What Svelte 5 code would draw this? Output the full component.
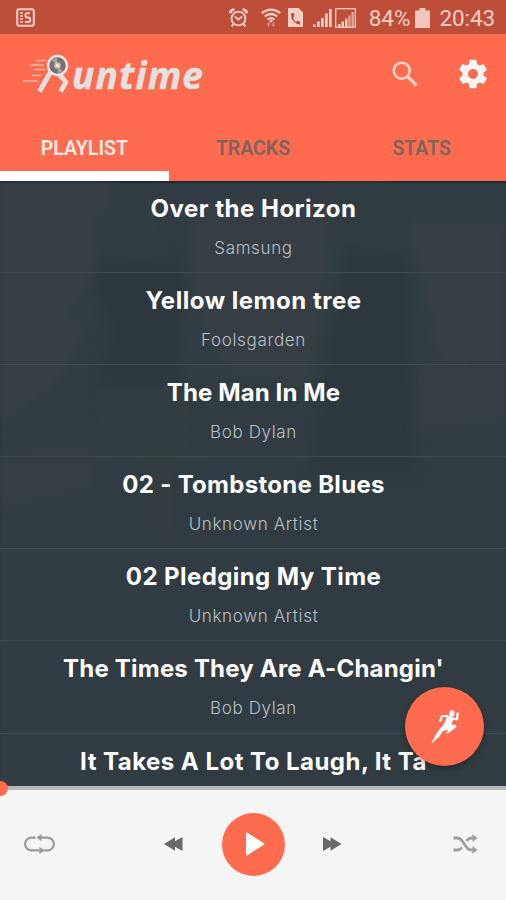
<script lang="ts">
  type Track = { title: string; artist?: string; tracking: number };

  const tabs = ['PLAYLIST', 'TRACKS', 'STATS'];
  let active = $state('PLAYLIST');
  let progress = $state(0);

  const tracks: Track[] = [
    { title: 'Over the Horizon', artist: 'Samsung', tracking: 0.5 },
    { title: 'Yellow lemon tree', artist: 'Foolsgarden', tracking: 0.52 },
    { title: 'The Man In Me', artist: 'Bob Dylan', tracking: 0.12 },
    { title: '02 - Tombstone Blues', artist: 'Unknown Artist', tracking: 0.3 },
    { title: '02 Pledging My Time', artist: 'Unknown Artist', tracking: 0.42 },
    { title: "The Times They Are A-Changin'", artist: 'Bob Dylan', tracking: 0.2 },
    { title: 'It Takes A Lot To Laugh, It Ta', tracking: 0.47 },
  ];
</script>

<div class="app">
  <div class="status">
    <svg class="note" width="19" height="19" viewBox="0 0 19 19">
      <rect x="1.2" y="1.2" width="16.6" height="16.6" rx="2" fill="none" stroke="currentColor" stroke-width="2" />
      <path d="M4 5h3M4 8h3M4 11h3M4 14h3" stroke="currentColor" stroke-width="1.6" />
      <path d="M14 5.2h-2.6q-2 0-2 2t2 2.3h1q1.8 0 1.8 2.2t-2 2.3H9" fill="none" stroke="currentColor" stroke-width="2" />
    </svg>
    <div class="indicators">
      <svg class="alarm" width="19" height="20" viewBox="0 0 19 20">
        <g fill="none" stroke="currentColor" stroke-width="1.9">
          <circle cx="9.5" cy="10.5" r="6.9" />
          <path d="M5.8 8.4l3.5 3.4 3.8-3.4M4.6 15.8l-2 2.5M14.4 15.8l2 2.5" />
          <path d="M1 5.3Q1.6 1.8 5.5 1.5M13.5 1.5q3.9.3 4.5 3.8" stroke-width="2.6" />
        </g>
      </svg>
      <svg class="wifi" width="20" height="20" viewBox="0 0 20 20">
        <g fill="none" stroke="currentColor" stroke-width="2.2">
          <path d="M.8 5.2q9.2-7 18.4 0M3.7 8.5q6.3-5 12.6 0M6.5 11.6q3.5-2.8 7 0" />
        </g>
        <circle cx="10" cy="13" r="1.5" fill="currentColor" />
        <path d="M7.6 14l2 2.5H8.3V19H6.9v-2.5H5.6zM12.4 19l-2-2.5h1.3V14h1.4v2.5h1.3z" fill="currentColor" opacity=".5" />
      </svg>
      <svg class="sim" width="15" height="19" viewBox="0 0 15 19">
        <path d="M1 0h9.5L15 4.5V18q0 1-1 1H1q-1 0-1-1V1q0-1 1-1z" fill="currentColor" />
        <path d="M3.4 5q-1 5 2 8.2t6.6 3.3l.2-2.8-2.9-1-1.3 1.2Q5.4 12 5.3 9.4l1.2-1.1L5.8 5z" fill="#bf4e39" />
      </svg>
      <svg class="bars" width="19" height="19" viewBox="0 0 19 19">
        <path d="M0 16.5h2.5V19H0zM4 13.5h2.7V19H4zM8 10h2.7v9H8zM12 5.5h2.7V19H12zM16 1h2.7v18H16z" fill="currentColor" />
      </svg>
      <svg class="boxed" width="21" height="20" viewBox="0 0 21 20">
        <rect x=".7" y=".7" width="19.6" height="18.6" fill="none" stroke="currentColor" stroke-width="1.3" />
        <path d="M3 16h2.500v3H3zM6.500 13.500H9V19H6.500zM10 10.500h2.500V19H10z" fill="currentColor" />
        <path d="M13.300 7.500h2.500V19h-2.500zM16.500 4H19v15h-2.500z" fill="currentColor" opacity=".65" />
      </svg>
      <span class="percent">84%</span>
      <svg class="battery" width="15" height="20" viewBox="0 0 15 20">
        <path d="M4.500 0h6v2.500H15V20H0V2.500h4.500z" fill="currentColor" />
      </svg>
      <span class="clock">20:43</span>
    </div>
  </div>

  <header>
    <div class="logo">
      <svg width="48" height="42" viewBox="0 0 48 42">
        <path d="M15 7.500h10M9 12h14M13 16.500h11M11 22.500h9M2 28h15" stroke="#f6b5a7" stroke-width="1.500" />
        <path d="M30 18L18.500 38.500" stroke="#dfdcdc" stroke-width="5" fill="none" />
        <path d="M39 19q-.5 4 2.500 6l3.500 4-5.500 9.500" stroke="#e4e1e1" stroke-width="4.800" fill="none" stroke-linejoin="round" />
        <circle cx="36.500" cy="12.500" r="9.500" fill="#77706f" stroke="#e9e6e5" stroke-width="2.500" />
        <path d="M36.500 12.500L31 7.300a7.500 7.500 0 0 1 5-2.400zM36.500 12.500l5.200 5.400a7.500 7.500 0 0 1-5 2.200z" fill="#aaa5a2" />
        <circle cx="36.500" cy="12.500" r="3.200" fill="#c9c5bd" />
        <circle cx="36.500" cy="12.500" r="1.500" fill="#fff6cc" />
      </svg>
      <span>untime</span>
    </div>
    <div class="actions">
      <button aria-label="Search">
        <svg width="26" height="26" viewBox="0 0 26 26">
          <circle cx="9.700" cy="9.700" r="8" fill="none" stroke="#ffd3ca" stroke-width="2.600" />
          <path d="M15.500 15.500l9 9" stroke="#ffd3ca" stroke-width="3.200" />
        </svg>
      </button>
      <button aria-label="Settings">
        <svg width="34" height="34" viewBox="0 0 24 24">
          <path
            fill="#f7f5f5"
            d="M19.430 12.980c.04-.32.07-.64.07-.98s-.03-.66-.07-.98l2.110-1.650c.19-.15.24-.42.12-.64l-2-3.460c-.12-.22-.39-.3-.61-.22l-2.490 1c-.52-.4-1.080-.73-1.690-.98l-.38-2.650C14.460 2.180 14.250 2 14 2h-4c-.25 0-.46.18-.49.42l-.38 2.650c-.61.25-1.170.59-1.690.98l-2.490-1c-.23-.09-.49 0-.61.22l-2 3.460c-.13.22-.07.49.12.64l2.110 1.650c-.04.32-.07.65-.07.98s.03.66.07.98l-2.110 1.650c-.19.15-.24.42-.12.64l2 3.460c.12.22.39.3.61.22l2.490-1c.52.4 1.080.73 1.690.98l.38 2.650c.03.24.24.42.49.42h4c.25 0 .46-.18.49-.42l.38-2.650c.61-.25 1.170-.59 1.690-.98l2.490 1c.23.09.49 0 .61-.22l2-3.460c.12-.22.07-.49-.12-.64l-2.110-1.650zM12 15.500c-1.930 0-3.500-1.570-3.500-3.500s1.570-3.500 3.500-3.500 3.500 1.570 3.500 3.500-1.570 3.500-3.500 3.500z"
          />
        </svg>
      </button>
    </div>
  </header>

  <nav>
    {#each tabs as tab}
      <button class:active={active === tab} onclick={() => (active = tab)}>{tab}</button>
    {/each}
  </nav>

  <main>
    <!-- faint runners behind the list -->
    <svg class="backdrop" viewBox="0 0 506 605" preserveAspectRatio="none">
      <g class="soft">
        <path d="M0 0h110v90L60 200l-60 40zM190 20h140v190L190 180zM410 40h96v140h-96z" fill="#383f45" />
        <path d="M118 20q20-14 38 0l2 50 35 10 8 65 35 50-5 20-36-25-6 90H95l10-110-5-30-40 5 38-60-5-50 25-18z" fill="#323e40" />
        <path d="M97 72l40 8 50-4-5 82 2 48H98l10-55-15-40z" fill="#2c383e" />
        <path d="M325 0h62v50l30 20 25 115h-40l-88 50H308l10-110 10-60z" fill="#313e40" />
        <path d="M345 65l65 10 5 220H310l15-130z" fill="#2c383e" />
        <path d="M0 275l90-15v45L0 330zM420 185l86-10v65l-86 10z" fill="#373e43" />
        <path d="M150 270h25v90h-25z" fill="#353d41" />
      </g>
    </svg>
    <ul>
      {#each tracks as track}
        <li>
          <strong style="letter-spacing: {track.tracking}px">{track.title}</strong>
          {#if track.artist}
            <span>{track.artist}</span>
          {/if}
        </li>
      {/each}
    </ul>
    <button class="fab" aria-label="Start run">
      <svg width="31" height="36" viewBox="0 0 31 36">
        <ellipse cx="23" cy="4.500" rx="2.600" ry="3.200" fill="#fff" />
        <path d="M17.500 5.500L25 9l-3.500 8.500-7-1.500 3-7z" fill="#fff" />
        <path d="M18 7h-5l-2 5.500M23 9.800l5 .2.800-6.500" fill="none" stroke="#fff" stroke-width="2.200" />
        <path d="M17 14.500l10 1.500.5 2-7.300 5.500-2 1.500-1-1 2-3.500-5.700 2-3 5L2 35l4.500-9L13 17z" fill="#fff" />
      </svg>
    </button>
  </main>

  <footer>
    <div class="seek">
      <span class="thumb" style="left: {progress}%"></span>
    </div>
    <div class="controls">
      <button aria-label="Repeat">
        <svg width="33" height="20" viewBox="0 0 33 20">
          <path d="M12.500 3.600H8.500a6.400 6.400 0 0 0 0 12.800H20M20.500 16.400h4a6.400 6.400 0 0 0 0-12.800H15" fill="none" stroke="#9b9b9b" stroke-width="2.200" />
          <path d="M18.500 0v7.200L13.500 3.600zM16.500 12.800V20l5-3.600z" fill="#9b9b9b" />
        </svg>
      </button>
      <button aria-label="Previous">
        <svg width="19" height="14" viewBox="0 0 19 14">
          <path d="M0 7L11 .3v4L18.500 0v14L11 9.700v4z" fill="#676a6c" />
        </svg>
      </button>
      <button class="play" aria-label="Play">
        <svg width="20" height="24" viewBox="0 0 20 24">
          <path d="M1 1.500Q1 0 2.500.8L18.500 11q1.500 1 0 2L2.500 23.200Q1 24 1 22.500z" fill="#fff" />
        </svg>
      </button>
      <button aria-label="Next">
        <svg width="19" height="14" viewBox="0 0 19 14">
          <path d="M18.500 7l-11 6.700v-4L0 14V0l7.500 4.300v-4z" fill="#676a6c" />
        </svg>
      </button>
      <button aria-label="Shuffle">
        <svg width="25" height="20" viewBox="0 0 25 20">
          <path d="M.5 4H4q3 0 5.500 3.500l3.500 5q2 3.500 6 3.500h1M.5 16H4q3 0 5-2.500M13.500 7q2-3 5.500-3h1" fill="none" stroke="#a0a0a0" stroke-width="2.800" />
          <path d="M19.500 0v8l5-4zM19.500 12v8l5-4z" fill="#a0a0a0" />
        </svg>
      </button>
    </div>
  </footer>
</div>

<style>
  :global(body) {
    margin: 0;
  }

  .app {
    display: flex;
    flex-direction: column;
    width: 506px;
    height: 900px;
    overflow: hidden;
    background: #ff6b4e;
    font-family: Roboto, sans-serif;
  }

  button {
    display: flex;
    align-items: center;
    justify-content: center;
    padding: 0;
    border: 0;
    background: none;
    font: inherit;
    cursor: pointer;
  }

  svg {
    display: block;
    flex: none;
  }

  .status {
    display: flex;
    align-items: center;
    justify-content: space-between;
    box-sizing: border-box;
    height: 34px;
    padding: 1px 11px 0 16px;
    background: #bf4e39;
    color: #f4cdc5;
    font-size: 22.5px;
  }

  .indicators {
    display: flex;
    align-items: center;
  }

  .wifi {
    margin-left: 13px;
  }

  .sim {
    margin-left: 7px;
  }

  .bars {
    margin-left: 10px;
  }

  .boxed {
    margin-left: 3px;
  }

  .percent {
    margin-left: 13px;
  }

  .battery {
    margin: 0 9px 0 5px;
    opacity: 0.95;
  }

  .clock {
    letter-spacing: -0.1px;
  }

  header {
    display: flex;
    justify-content: space-between;
    height: 79px;
    padding: 0 16px 0 21px;
  }

  .logo {
    display: flex;
    align-items: center;
  }

  .logo span {
    margin-left: 3px;
    padding-top: 2px;
    color: #e4e1e2;
    font: italic 700 37px 'Open Sans', sans-serif;
    letter-spacing: 1.2px;
    -webkit-text-stroke: 0.5px #e4e1e2;
  }

  .actions {
    display: flex;
    align-items: center;
    gap: 38px;
  }

  nav {
    display: flex;
    height: 68px;
  }

  nav button {
    flex: 1;
    box-sizing: border-box;
    border-bottom: 10px solid transparent;
    padding-top: 12px;
    color: #7c635d;
    font-size: 19.5px;
    font-weight: 600;
  }

  nav button.active {
    border-bottom-color: #fff;
    color: #ffece7;
  }

  main {
    position: relative;
    height: 605px;
    overflow: hidden;
    background: #303c41;
    box-shadow: inset 0 2px 1px #1b2c32;
  }

  .backdrop {
    position: absolute;
    inset: 0;
    width: 100%;
    height: 100%;
    opacity: 0.8;
  }

  .soft {
    filter: blur(6px);
  }

  ul {
    position: relative;
    margin: 0;
    padding: 0;
    list-style: none;
  }

  li {
    display: flex;
    flex-direction: column;
    align-items: center;
    box-sizing: border-box;
    height: 92.1px;
    padding: 13px 0 0 1px;
    border-bottom: 1px solid #3e4b50;
    font-family: Inter, sans-serif;
    white-space: nowrap;
  }

  li strong {
    color: #fff;
    font-size: 24px;
    font-weight: 700;
    line-height: 30px;
  }

  li span {
    margin-top: 12px;
    color: #b9c0c3;
    font-size: 17px;
    font-weight: 300;
    line-height: 24px;
    letter-spacing: 0.65px;
  }

  .fab {
    position: absolute;
    right: 22px;
    bottom: 20px;
    width: 79px;
    height: 79px;
    border-radius: 50%;
    background: #ff6b4e;
    box-shadow: 0 3px 6px rgba(0, 0, 0, 0.3);
  }

  footer {
    flex: 1;
    background: #f5f5f5;
  }

  .seek {
    position: relative;
    height: 4px;
    background: #b5b7b8;
  }

  .thumb {
    position: absolute;
    top: -5px;
    width: 15px;
    height: 15px;
    margin-left: -7px;
    border-radius: 50%;
    background: #ff6b4e;
  }

  .controls {
    display: flex;
    align-items: center;
    justify-content: space-between;
    height: 108px;
    padding: 0 28px 0 23px;
  }

  .controls button:first-child {
    margin-right: 70px;
  }

  .controls button:last-child {
    margin-left: 73px;
  }

  .play {
    width: 63px;
    height: 63px;
    padding-left: 3px;
    border-radius: 50%;
    background: #ff6b4e;
  }
</style>
